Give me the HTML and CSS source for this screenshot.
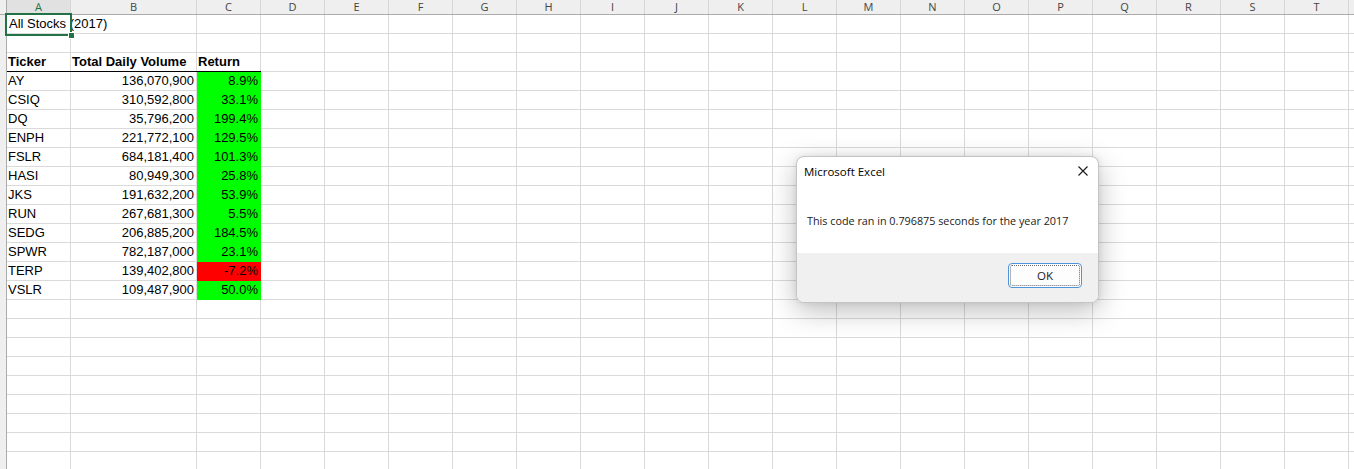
FILE: index.html
```html
<!DOCTYPE html>
<html lang="en">
<head>
<meta charset="utf-8">
<title>All Stocks (2017)</title>
<link rel="stylesheet" href="styles.css">
</head>
<body>
<div class="app">
  <div class="colheads">
    <div class="corner"></div>
    <div class="ch ch-sel">A</div>
    <div class="ch ch-wide">B</div>
    <div class="ch">C</div>
    <div class="ch">D</div>
    <div class="ch">E</div>
    <div class="ch">F</div>
    <div class="ch">G</div>
    <div class="ch">H</div>
    <div class="ch">I</div>
    <div class="ch">J</div>
    <div class="ch">K</div>
    <div class="ch">L</div>
    <div class="ch">M</div>
    <div class="ch">N</div>
    <div class="ch">O</div>
    <div class="ch">P</div>
    <div class="ch">Q</div>
    <div class="ch">R</div>
    <div class="ch">S</div>
    <div class="ch">T</div>
    <div class="ch"></div>
  </div>
  <div class="main">
    <div class="rowheads"></div>
    <div class="sheet">
      <div class="grid">
        <div class="cell a1">All Stocks (2017)<span class="selbox"><span class="handle"></span></span></div><div class="cell"></div><div class="cell"></div>
        <div class="cell"></div><div class="cell"></div><div class="cell"></div>
        <div class="cell hdr">Ticker</div><div class="cell hdr">Total Daily Volume</div><div class="cell hdr">Return</div>
        <div class="cell">AY</div><div class="cell num">136,070,900</div><div class="cell num pos">8.9%</div>
        <div class="cell">CSIQ</div><div class="cell num">310,592,800</div><div class="cell num pos">33.1%</div>
        <div class="cell">DQ</div><div class="cell num">35,796,200</div><div class="cell num pos">199.4%</div>
        <div class="cell">ENPH</div><div class="cell num">221,772,100</div><div class="cell num pos">129.5%</div>
        <div class="cell">FSLR</div><div class="cell num">684,181,400</div><div class="cell num pos">101.3%</div>
        <div class="cell">HASI</div><div class="cell num">80,949,300</div><div class="cell num pos">25.8%</div>
        <div class="cell">JKS</div><div class="cell num">191,632,200</div><div class="cell num pos">53.9%</div>
        <div class="cell">RUN</div><div class="cell num">267,681,300</div><div class="cell num pos">5.5%</div>
        <div class="cell">SEDG</div><div class="cell num">206,885,200</div><div class="cell num pos">184.5%</div>
        <div class="cell">SPWR</div><div class="cell num">782,187,000</div><div class="cell num pos">23.1%</div>
        <div class="cell">TERP</div><div class="cell num">139,402,800</div><div class="cell num neg">-7.2%</div>
        <div class="cell">VSLR</div><div class="cell num">109,487,900</div><div class="cell num pos">50.0%</div>
      </div>
    </div>
  </div>

  <div class="dialog" role="dialog" aria-label="Microsoft Excel">
    <div class="dlg-title">
      <span class="dlg-caption">Microsoft Excel</span>
      <svg class="dlg-close" width="10" height="10" viewBox="0 0 10 10" aria-hidden="true">
        <path d="M0.5 0.5 L9.5 9.5 M9.5 0.5 L0.5 9.5" stroke="#1a1a1a" stroke-width="1.1" fill="none"/>
      </svg>
    </div>
    <div class="dlg-msg">This code ran in 0.796875 seconds for the year 2017</div>
    <div class="dlg-foot">
      <button class="dlg-ok" type="button">OK</button>
    </div>
  </div>
</div>
</body>
</html>
```

FILE: styles.css
```css
* {
  box-sizing: border-box;
  margin: 0;
  padding: 0;
}

html,
body {
  width: 1354px;
  height: 469px;
  overflow: hidden;
  background: #ffffff;
}

body {
  font-family: "Liberation Sans", Arial, sans-serif;
}

.app {
  position: relative;
  width: 1354px;
  height: 469px;
  display: flex;
  flex-direction: column;
}

/* column headers */
.colheads {
  display: flex;
  flex: none;
  height: 15px;
  background: #efefef;
  border-bottom: 1px solid #ababab;
}

.corner {
  flex: none;
  width: 7px;
  border-right: 1px solid #ababab;
}

.ch {
  flex: none;
  width: 64px;
  border-right: 1px solid #d6d6d6;
  font-family: "Open Sans", "Noto Sans", sans-serif;
  font-size: 11px;
  line-height: 14px;
  color: #444444;
  text-align: center;
}

.ch-wide {
  width: 126px;
}

.ch-sel {
  background: #e1e1e1;
  color: #217346;
  box-shadow: inset 0 -1px 0 #217346;
}

/* body */
.main {
  flex: 1;
  display: flex;
}

.rowheads {
  flex: none;
  width: 7px;
  background: #efefef;
  border-right: 1px solid #ababab;
}

.sheet {
  flex: 1;
  background-image:
    repeating-linear-gradient(to bottom, transparent 0 18px, #dadada 18px 19px),
    linear-gradient(#dadada, #dadada),
    linear-gradient(#dadada, #dadada),
    repeating-linear-gradient(to right, transparent 0 63px, #dadada 63px 64px);
  background-size: auto, 1px 100%, 1px 100%, auto;
  background-position: 0 0, 63px 0, 189px 0, 190px 0;
  background-repeat: repeat, no-repeat, no-repeat, no-repeat;
}

.grid {
  display: grid;
  grid-template-columns: 64px 126px 64px;
  grid-auto-rows: 19px;
  font-size: 13px;
  line-height: 18px;
  color: #000000;
}

.cell {
  padding: 0 2px 0 1px;
  white-space: nowrap;
}

.a1 {
  position: relative;
  overflow: visible;
  padding-left: 2px;
}

.selbox {
  position: absolute;
  left: -2px;
  top: -2px;
  width: 67px;
  height: 23px;
  border: 2px solid #217346;
}

.handle {
  position: absolute;
  right: -5px;
  bottom: -5px;
  width: 7px;
  height: 7px;
  background: #217346;
  border: 1px solid #ffffff;
}

.hdr {
  font-weight: bold;
  border-bottom: 1px solid #000000;
}

.num {
  text-align: right;
  padding-right: 3px;
}

.pos {
  background: #00ff00;
}

.neg {
  background: #ff0000;
}

/* dialog */
.dialog {
  position: absolute;
  left: 796px;
  top: 156px;
  width: 303px;
  height: 147px;
  display: flex;
  flex-direction: column;
  background: #ffffff;
  border: 1px solid #c4c4c4;
  border-radius: 8px;
  overflow: hidden;
  box-shadow: 0 8px 28px rgba(0, 0, 0, 0.26), 0 0 6px rgba(0, 0, 0, 0.08);
  font-family: "Open Sans", "Noto Sans", sans-serif;
  font-size: 10.8px;
  color: #000000;
}

.dlg-title {
  flex: none;
  height: 28px;
  display: flex;
  align-items: center;
  justify-content: space-between;
  padding: 0 10px 0 7px;
}

.dlg-caption {
  font-size: 11.5px;
}

.dlg-msg {
  flex: 1;
  display: flex;
  align-items: center;
  padding: 2px 0 0 10px;
  color: #1a1a1a;
}

.dlg-foot {
  flex: none;
  height: 49px;
  display: flex;
  justify-content: flex-end;
  align-items: flex-start;
  padding: 10px 16px 0 0;
  background: #f0f0f0;
}

.dlg-ok {
  width: 74px;
  height: 25px;
  background: #fdfdfd;
  border: 1px solid #4d94dd;
  border-radius: 4px;
  outline: 1px dotted #6a6a6a;
  outline-offset: -3px;
  font-family: "Open Sans", "Noto Sans", sans-serif;
  font-size: 11.5px;
  color: #1a1a1a;
}
```
